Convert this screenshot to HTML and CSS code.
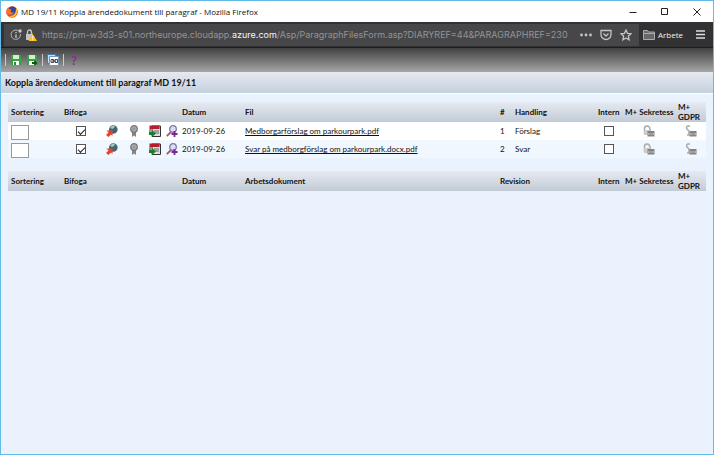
FILE: index.html
```html
<!DOCTYPE html>
<html lang="sv">
<head>
    <meta charset="UTF-8">
    <meta name="viewport" content="width=device-width, initial-scale=1.0">
    <title>MD 19/11 Koppla ärendedokument till paragraf</title>
    <link rel="stylesheet" href="styles.css">
</head>
<body>
    <!-- Shared icons -->
    <svg class="sprite" aria-hidden="true">
        <symbol id="globe" viewBox="0 0 12 12">
            <circle cx="7.300" cy="4.500" r="4.300" fill="#3f6675"/>
            <path d="M4 2.500Q6 0 9 1L8 3 6 4Z" fill="#a3c9bd"/>
            <path d="M0.500 5.500H6.500V11L5 9.500 2.500 12 0 10 2.500 7.500Z" fill="#e8402a"/>
        </symbol>
        <symbol id="medal" viewBox="0 0 12 12">
            <path d="M4 6h4v6L6 10.500 4 12Z" fill="#858585"/>
            <circle cx="6" cy="4" r="3.300" fill="#a8a8a8" stroke="#777" stroke-width="1.200"/>
            <circle cx="6" cy="4" r="1.300" fill="#999"/>
        </symbol>
        <symbol id="pdf" viewBox="0 0 12 12">
            <path d="M3 1h8.500v10.500H3Z" fill="#ddd" stroke="#333"/>
            <path d="M0.500 0.500h10v3.500h-10Z" fill="#b51f2c"/>
            <path d="M1 4v3" stroke="#333"/>
            <path d="M5 6h5M6 8h4" stroke="#666"/>
            <path d="M0 7h3V5l4 3.500L3 12v-2H0Z" fill="#1f7d32"/>
        </symbol>
        <symbol id="magnifier" viewBox="0 0 12 12">
            <path d="M0.800 11.200L5 7" stroke="#b0506a" stroke-width="1.800"/>
            <circle cx="7" cy="4" r="3.300" fill="#dcdcf8" stroke="#7b78a8" stroke-width="1.300"/>
            <path d="M8.500 6v6M5.500 9h6" stroke="#7a2690" stroke-width="1.800"/>
        </symbol>
        <symbol id="lock" viewBox="0 0 12 12">
            <path d="M1.500 9V3.500Q1.500 1 4 1T7 4v2" fill="none" stroke="#aaa" stroke-width="1.500"/>
            <path d="M1 5h6v5H1Z" fill="#ccc"/>
            <path d="M4.500 6h7v5.500h-7Z" fill="#848484"/>
            <path d="M5.500 8v2M7 8v2M9 8v2M10.500 8v2" stroke="#ccc" stroke-width="0.700"/>
        </symbol>
        <symbol id="gdpr" viewBox="0 0 12 12">
            <path d="M5 1H2.500Q1 2 2 4l2 2v4H2" fill="none" stroke="#aaa" stroke-width="1.500"/>
            <path d="M4.500 6h7v5.500h-7Z" fill="#848484"/>
            <path d="M5.500 8v2M7 8v2M9 8v2M10.500 8v2" stroke="#ccc" stroke-width="0.700"/>
        </symbol>
    </svg>

    <div class="window">
        <!-- Title bar -->
        <div class="title-bar">
            <svg class="firefox" viewBox="0 0 12 12">
                <circle cx="6" cy="6" r="5.800" fill="#e9432c"/>
                <circle cx="6.500" cy="4.800" r="4.200" fill="#34459b"/>
                <path d="M10 1.500Q12.500 6 9.500 9.500Q6 12.500 2.500 9.500Q5 11 8 8.500Q10.500 6 10 1.500Z" fill="#ffc928"/>
                <path d="M0.500 4L2 1.500 3 3 5.500 3.500 4.500 5 5.500 6.500 8 6.500Q6.500 9.500 3.500 8.500L0.500 8Z" fill="#f5752d"/>
            </svg>
            <span class="window-title">MD 19/11 Koppla ärendedokument till paragraf - Mozilla Firefox</span>
            <button class="win-btn" aria-label="Minimera"><svg viewBox="0 0 8 8"><path d="M0.500 4.500h7"/></svg></button>
            <button class="win-btn" aria-label="Maximera"><svg viewBox="0 0 8 8"><path d="M0.500 0.500h6v6h-6Z"/></svg></button>
            <button class="win-btn" aria-label="Stäng"><svg viewBox="0 0 8 8"><path d="M0.500 0.500l7 7M7.500 0.500l-7 7"/></svg></button>
        </div>

        <!-- Address bar -->
        <div class="nav-bar">
            <div class="address">
                <svg viewBox="0 0 12 12">
                    <path d="M8 1.600A4.700 4.700 0 1 0 10.400 5" fill="none" stroke="#b5b5b5"/>
                    <path d="M6 5.500V9M6 3v1.300" stroke="#ccc" stroke-width="1.300"/>
                    <circle cx="10" cy="2" r="1.700" fill="#ccc"/>
                </svg>
                <svg viewBox="0 0 12 12">
                    <path d="M2.500 6V3.500Q2.500 1 4.500 1T6.500 3.500V6" fill="none" stroke="#c4c4c4" stroke-width="1.400"/>
                    <path d="M1 5h7v6H1Z" fill="#c4c4c4"/>
                    <path d="M7.500 4.500L12 12H3.500Z" fill="#ffbf1f"/>
                    <path d="M7.700 7v2.500M7.700 10.200v1" stroke="#fff"/>
                </svg>
                <span class="url">https://pm-w3d3-s01.northeurope.cloudapp.<b>azure.com</b>/Asp/ParagraphFilesForm.asp?DIARYREF=44&amp;PARAGRAPHREF=230</span>
                <button class="nav-btn" aria-label="Fler åtgärder"><svg viewBox="0 0 12 12"><circle cx="1.500" cy="6" r="1.400"/><circle cx="6" cy="6" r="1.400"/><circle cx="10.500" cy="6" r="1.400"/></svg></button>
                <button class="nav-btn" aria-label="Pocket"><svg class="line" viewBox="0 0 12 12"><path d="M1 1.500h10v4a5 5 0 0 1-10 0ZM3.500 4.500L6 7l2.500-2.500"/></svg></button>
                <button class="nav-btn" aria-label="Bokmärk"><svg class="line" viewBox="0 0 12 12"><path d="M6 1l1.500 3.300 3.500.4-2.600 2.400.7 3.700L6 9l-3.100 1.800.7-3.700L1 4.700l3.500-.4Z"/></svg></button>
            </div>
            <button class="bookmark">
                <svg viewBox="0 0 12 12"><path d="M0.500 10.500v-9h4L5.500 3h6v7.500ZM0.500 4.500h11" fill="#686868" stroke="#aaa"/></svg>
                Arbete
            </button>
            <button class="menu-btn" aria-label="Meny"><svg viewBox="0 0 9 9"><path d="M0 1h9M0 4.500h9M0 8h9"/></svg></button>
        </div>

        <!-- Page toolbar -->
        <div class="toolbar">
            <span class="divider"></span>
            <button aria-label="Spara">
                <svg viewBox="0 0 12 12"><path d="M1 1h10v10H1Z" fill="#35a342"/><path d="M3 1h6v4H3Z" fill="#d3f0cd"/><path d="M3 7h6v4H3Z" fill="#fff"/><path d="M4 8h2v3H4Z" fill="#2c8b35"/></svg>
            </button>
            <button aria-label="Spara och stäng">
                <svg viewBox="0 0 12 12"><path d="M1 1h10v10H1Z" fill="#35a342"/><path d="M3 1h6v4H3Z" fill="#d3f0cd"/><path d="M3 7h5v4H3Z" fill="#fff"/><path d="M6 8h2.500V6.300L11.500 9 8.500 11.700V10H6Z" fill="#164f1d"/></svg>
            </button>
            <span class="divider"></span>
            <button aria-label="Koppla dokument">
                <svg viewBox="0 0 12 12"><path d="M0.500 0.500h8v9h-8Z" fill="#c4dcf5" stroke="#497aad"/><path d="M2.500 2.500h9v9h-9Z" fill="#fff" stroke="#6e9ac8"/><path d="M4 5.500h2.500v3H4ZM8 5.500h2.500v3H8ZM5 7h4" fill="none" stroke="#444"/></svg>
            </button>
            <span class="divider"></span>
            <button class="help" aria-label="Hjälp">?</button>
        </div>

        <h1>Koppla ärendedokument till paragraf MD 19/11</h1>

        <main>
            <table>
                <colgroup>
                    <col class="col-sort"><col class="col-attach"><col class="col-icon"><col class="col-icon">
                    <col class="col-pdf"><col class="col-view"><col class="col-date"><col>
                    <col class="col-nr"><col class="col-type"><col class="col-intern"><col class="col-secret"><col class="col-gdpr">
                </colgroup>
                <thead>
                    <tr>
                        <th>Sortering</th>
                        <th colspan="5">Bifoga</th>
                        <th>Datum</th>
                        <th>Fil</th>
                        <th>#</th>
                        <th>Handling</th>
                        <th>Intern</th>
                        <th>M+ Sekretess</th>
                        <th class="wrap">M+ GDPR</th>
                    </tr>
                </thead>
                <tbody>
                    <tr>
                        <td class="sort"><input type="text" aria-label="Sortering 1"></td>
                        <td class="center"><input type="checkbox" aria-label="Bifoga 1" checked></td>
                        <td class="center"><svg><use href="#globe"/></svg></td>
                        <td class="center"><svg><use href="#medal"/></svg></td>
                        <td class="center"><svg><use href="#pdf"/></svg></td>
                        <td class="center"><svg><use href="#magnifier"/></svg></td>
                        <td>2019-09-26</td>
                        <td><a href="#">Medborgarförslag om parkourpark.pdf</a></td>
                        <td>1</td>
                        <td>Förslag</td>
                        <td class="center"><input type="checkbox" aria-label="Intern 1"></td>
                        <td class="center"><svg><use href="#lock"/></svg></td>
                        <td class="center"><svg><use href="#gdpr"/></svg></td>
                    </tr>
                    <tr>
                        <td class="sort"><input type="text" aria-label="Sortering 2"></td>
                        <td class="center"><input type="checkbox" aria-label="Bifoga 2" checked></td>
                        <td class="center"><svg><use href="#globe"/></svg></td>
                        <td class="center"><svg><use href="#medal"/></svg></td>
                        <td class="center"><svg><use href="#pdf"/></svg></td>
                        <td class="center"><svg><use href="#magnifier"/></svg></td>
                        <td>2019-09-26</td>
                        <td><a href="#">Svar på medborgförslag om parkourpark.docx.pdf</a></td>
                        <td>2</td>
                        <td>Svar</td>
                        <td class="center"><input type="checkbox" aria-label="Intern 2"></td>
                        <td class="center"><svg><use href="#lock"/></svg></td>
                        <td class="center"><svg><use href="#gdpr"/></svg></td>
                    </tr>
                </tbody>
            </table>

            <table>
                <colgroup>
                    <col class="col-sort"><col class="col-attach"><col class="col-icon"><col class="col-icon">
                    <col class="col-pdf"><col class="col-view"><col class="col-date"><col>
                    <col class="col-nr"><col class="col-type"><col class="col-intern"><col class="col-secret"><col class="col-gdpr">
                </colgroup>
                <thead>
                    <tr>
                        <th>Sortering</th>
                        <th colspan="5">Bifoga</th>
                        <th>Datum</th>
                        <th>Arbetsdokument</th>
                        <th colspan="2">Revision</th>
                        <th>Intern</th>
                        <th>M+ Sekretess</th>
                        <th class="wrap">M+ GDPR</th>
                    </tr>
                </thead>
            </table>
        </main>
    </div>
</body>
</html>
```

FILE: styles.css
```css
* {
    box-sizing: border-box;
}

body {
    margin: 0;
    font-family: Lato, "Liberation Sans", sans-serif;
    font-size: 8px;
    color: #111;
}

button {
    display: flex;
    align-items: center;
    justify-content: center;
    padding: 0;
    border: none;
    background: none;
    font-family: inherit;
}

svg {
    display: block;
    flex: none;
    width: 12px;
    height: 12px;
}

.sprite {
    display: none;
}

.window {
    min-height: 100vh;
    border: 1px solid #63bce8;
    background: #eaf2fd;
}

/* Title bar */
.title-bar {
    display: flex;
    align-items: center;
    height: 21px;
    padding-left: 5px;
    background: #fff;
    font-family: "Open Sans", sans-serif;
}

.window-title {
    flex: 1;
    padding-left: 3px;
}

.win-btn {
    width: 32px;
    height: 21px;
}

.win-btn svg {
    width: 8px;
    height: 8px;
    fill: none;
    stroke: #222;
}

/* Address bar */
.nav-bar {
    display: flex;
    align-items: center;
    height: 26px;
    background: #323234;
    border-bottom: 1px solid #1c1c1d;
}

.address {
    display: flex;
    flex: 1;
    align-items: center;
    gap: 3px;
    min-width: 0;
    height: 22px;
    margin-left: 3px;
    padding: 0 4px 0 6px;
    background: #474749;
}

.url {
    flex: 1;
    overflow: hidden;
    padding-left: 2px;
    color: #949496;
    font-family: Inter, "Open Sans", sans-serif;
    font-size: 9px;
    white-space: nowrap;
}

.url b {
    color: #f5f5f5;
    font-weight: 400;
}

.nav-btn {
    width: 17px;
    height: 20px;
}

.nav-btn svg {
    fill: #c4c4c4;
}

.nav-btn .line {
    fill: none;
    stroke: #c4c4c4;
    stroke-width: 1.3;
}

.bookmark {
    gap: 3px;
    padding-left: 4px;
    color: #f2f2f2;
    font-family: "Open Sans", sans-serif;
    font-size: 8px;
}

.menu-btn {
    width: 30px;
    height: 20px;
    padding-left: 4px;
}

.menu-btn svg {
    width: 9px;
    height: 9px;
    stroke: #ddd;
    stroke-width: 1.3;
}

/* Page toolbar */
.toolbar {
    display: flex;
    align-items: center;
    gap: 4px;
    height: 24px;
    padding-left: 4px;
    background: linear-gradient(#414141, #a6a6a6);
}

.divider {
    width: 1px;
    height: 12px;
    background: #c9c9c9;
}

.help {
    width: 12px;
    color: #8c2d9c;
    font-family: "Open Sans", sans-serif;
    font-size: 12px;
    font-weight: 700;
}

h1 {
    height: 22px;
    margin: 0;
    padding-left: 4px;
    border-bottom: 1px solid #fff;
    background: linear-gradient(#e5e9f1, #c5d0dd);
    font-size: 9px;
    line-height: 22px;
}

/* Document lists */
main {
    display: flex;
    flex-direction: column;
    gap: 13px;
    padding: 8px 7px;
}

table {
    width: 100%;
    table-layout: fixed;
    border-collapse: collapse;
}

th,
td {
    height: 18px;
    padding: 0 0 0 3px;
    line-height: 10px;
    text-align: left;
    white-space: nowrap;
}

th {
    height: 20px;
}

th.wrap {
    white-space: normal;
}

td.center {
    padding: 0;
}

.center svg,
.center input {
    margin: 0 auto;
}

td.sort {
    vertical-align: bottom;
}

thead tr {
    background: linear-gradient(#e6eaf2, #c2cbd6);
}

tbody tr {
    background: #fff;
}

tbody tr:nth-child(even) {
    background: #f0f7ff;
}

td a {
    color: #111;
}

.col-sort { width: 53px; }
.col-attach { width: 40px; }
.col-icon { width: 22px; }
.col-pdf { width: 20px; }
.col-view { width: 14px; }
.col-date { width: 63px; }
.col-nr { width: 15px; }
.col-type { width: 83px; }
.col-intern { width: 27px; }
.col-secret { width: 53px; }
.col-gdpr { width: 31px; }

input[type="text"] {
    display: block;
    width: 18px;
    height: 15px;
    padding: 0;
    border: 1px solid #999;
    background: #fff;
}

input[type="checkbox"] {
    display: block;
    width: 10px;
    height: 10px;
    appearance: none;
    border: 1px solid #555;
    background: #fff;
}

/* Tick mark */
input[type="checkbox"]:checked::before {
    content: "";
    display: block;
    width: 6px;
    height: 3px;
    margin: 2px 1px;
    border-left: 1px solid #222;
    border-bottom: 1px solid #222;
    transform: rotate(-45deg);
}
```
